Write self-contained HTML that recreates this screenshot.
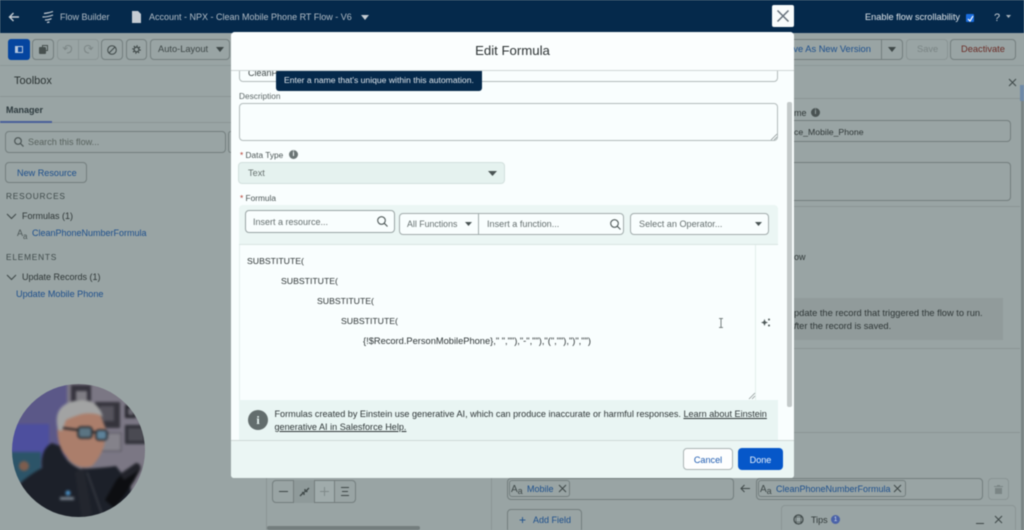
<!DOCTYPE html>
<html><head><meta charset="utf-8">
<style>
html,body{margin:0;padding:0;width:1024px;height:530px;overflow:hidden;background:#99a4a4}
body{font-family:"Liberation Sans",sans-serif;position:relative}
#w{position:absolute;left:0;top:0;width:1024px;height:530px;overflow:hidden;background:#99a4a4;filter:blur(0.55px)}
.a{position:absolute;box-sizing:border-box}
.t{position:absolute;white-space:nowrap;line-height:14px}
.bx{position:absolute;box-sizing:border-box;border:1px solid #747e7e;border-radius:4px}
.mb{position:absolute;box-sizing:border-box;border:1px solid #b3bcbc;border-radius:4px;background:#f9fefe}
svg{position:absolute;overflow:visible}
</style></head><body><div id="w">

<!-- header -->
<div class="a" style="left:0;top:0;width:1024px;height:33px;background:#05294b"></div>
<svg style="left:8px;top:11px" width="12" height="12" viewBox="0 0 12 12" fill="none" stroke="#c5ccd3" stroke-width="1.4"><path d="M11 6H1.500M5.500 2L1.500 6l4 4"/></svg>
<svg style="left:41px;top:10px" width="14" height="14" viewBox="0 0 14 14" fill="none" stroke="#c5ccd3" stroke-width="1.200"><path d="M3 3.500Q8 3 12 1.500M1.500 7Q7 7 12 5M4 10Q8 10 10.500 8.500M6 12.500L8.500 12"/></svg>
<div class="t" style="left:60px;top:10px;font-size:9px;color:#b4bec7">Flow Builder</div>
<svg style="left:132px;top:11px" width="10" height="12" viewBox="0 0 10 12"><path d="M0 0H6L9 3V12H0Z" fill="#c5ccd3"/></svg>
<div class="t" style="left:149px;top:10px;font-size:9px;color:#b4bec7">Account - NPX - Clean Mobile Phone RT Flow - V6</div>
<svg style="left:361px;top:15px" width="8" height="5"><path d="M0 0H8L4 5Z" fill="#c5ccd3"/></svg>

<div class="a" style="left:772px;top:5px;width:22px;height:22px;background:#f9fcfc;border-radius:2px"></div>
<svg style="left:777px;top:10px" width="12" height="12" fill="none" stroke="#66707a" stroke-width="1.500"><path d="M0.500 0.500L11.500 11.500M11.500 0.500L0.500 11.500"/></svg>
<div class="t" style="left:865px;top:10px;font-size:9.200px;color:#dfe5ea">Enable flow scrollability</div>
<div class="a" style="left:966px;top:14px;width:8px;height:8px;background:#1b6ee0;border-radius:1px"></div>
<svg style="left:967px;top:15px" width="7" height="7" fill="none" stroke="#fff" stroke-width="1.200"><path d="M1 4L3 6L6 1"/></svg>
<div class="t" style="left:994px;top:11px;font-size:11px;color:#c5ccd3">?</div>
<svg style="left:1006px;top:15px" width="5" height="3"><path d="M0 0H5L2.500 3Z" fill="#aab4bd"/></svg>

<!-- toolbar -->
<div class="a" style="left:0;top:33px;width:1024px;height:33px;background:#99a4a4;border-bottom:1px solid #8d9898"></div>
<div class="a" style="left:8px;top:39px;width:22px;height:21px;background:#05459f;border-radius:3px"></div>
<div class="a" style="left:15px;top:46px;width:8px;height:7px;border:1px solid #b5c6dc;border-left-width:3px"></div>
<div class="bx" style="left:32px;top:39px;width:22px;height:21px"></div>
<div class="a" style="left:39px;top:47px;width:7px;height:7px;background:#47504f;border-radius:1px"></div>
<div class="a" style="left:42px;top:45px;width:6px;height:6px;border:1px solid #47504f"></div>
<div class="bx" style="left:57px;top:39px;width:42px;height:21px;border-color:#8a9494"></div>
<div class="a" style="left:78px;top:39px;width:1px;height:21px;background:#8a9494"></div>
<svg style="left:63px;top:44px" width="10" height="10" fill="none" stroke="#7c8686" stroke-width="1"><path d="M2 5Q2 1 5.500 1.500Q9 2 8.500 5.500Q8 9 4 9M0 3L2 5.500L4.500 3.500"/></svg>
<svg style="left:83px;top:44px" width="10" height="10" fill="none" stroke="#7c8686" stroke-width="1"><path d="M8 5Q8 1 4.500 1.500Q1 2 1.500 5.500Q2 9 6 9M10 3L8 5.500L5.500 3.500"/></svg>
<div class="bx" style="left:101px;top:39px;width:22px;height:21px"></div>
<svg style="left:107px;top:45px" width="10" height="10" fill="none" stroke="#3f4848" stroke-width="1"><circle cx="5" cy="5" r="4.300"/><path d="M2 8L8 2"/></svg>
<div class="bx" style="left:126px;top:39px;width:21px;height:21px"></div>
<svg style="left:132px;top:45px" width="9" height="9" fill="none" stroke="#3f4848"><circle cx="4.500" cy="4.500" r="2.400" stroke-width="1.200"/><circle cx="4.500" cy="4.500" r="3.600" stroke-dasharray="1.200 1.600" stroke-width="1.400"/></svg>
<div class="bx" style="left:150px;top:39px;width:80px;height:21px"></div>
<div class="t" style="left:158px;top:42px;font-size:9.300px;color:#3e4747">Auto-Layout</div>
<svg style="left:216px;top:47px" width="8" height="5"><path d="M0 0H8L4 5Z" fill="#3f4848"/></svg>

<div class="bx" style="left:794px;top:39px;width:88px;height:21px;border-left:0;border-radius:0"></div>
<div class="t" style="left:794px;top:42px;font-size:9.300px;color:#1d4f8c;width:78px;overflow:hidden;height:14px"><span style="margin-left:-12px">Save As New Version</span></div>
<div class="bx" style="left:881px;top:39px;width:22px;height:21px;border-radius:0 4px 4px 0"></div>
<svg style="left:888px;top:47px" width="8" height="5"><path d="M0 0H8L4 5Z" fill="#3f4848"/></svg>
<div class="bx" style="left:906px;top:39px;width:42px;height:21px;border-color:#8a9494"></div>
<div class="t" style="left:917px;top:42px;font-size:9.300px;color:#7a8484">Save</div>
<div class="bx" style="left:950px;top:39px;width:66px;height:21px"></div>
<div class="t" style="left:961px;top:42px;font-size:9.300px;color:#6b2c26">Deactivate</div>

<!-- toolbox -->
<div class="t" style="left:14px;top:74px;font-size:11px;color:#2a3232">Toolbox</div>
<div class="a" style="left:0;top:96px;width:231px;height:1px;background:#8b9595"></div>
<div class="t" style="left:6px;top:103px;font-size:9px;font-weight:bold;color:#2d3a3e">Manager</div>
<div class="a" style="left:0;top:122px;width:231px;height:1px;background:#8b9595"></div>
<div class="a" style="left:0;top:121px;width:52px;height:2px;background:#4a5f9a"></div>

<div class="bx" style="left:5px;top:131px;width:221px;height:22px"></div>
<div class="a" style="left:228px;top:131px;width:3px;height:22px;border:1px solid #747e7e;border-right:0;border-radius:3px 0 0 3px"></div>
<svg style="left:14px;top:137px" width="10" height="10" fill="none" stroke="#4b5555" stroke-width="1.200"><circle cx="4" cy="4" r="3.300"/><path d="M6.500 6.500L9.500 9.500"/></svg>
<div class="t" style="left:28px;top:135px;font-size:9.100px;color:#59635f">Search this flow...</div>
<div class="bx" style="left:5px;top:162px;width:82px;height:21px"></div>
<div class="t" style="left:17px;top:166px;font-size:9.100px;color:#1d4f8c">New Resource</div>
<div class="t" style="left:6px;top:189px;font-size:8.300px;letter-spacing:.8px;color:#3f4a4a">RESOURCES</div>
<svg style="left:7px;top:214px" width="9" height="5" fill="none" stroke="#3f4848" stroke-width="1"><path d="M0 0L4.500 4.500L9 0"/></svg>
<div class="t" style="left:22px;top:209px;font-size:9px;color:#2f3737">Formulas (1)</div>
<div class="t" style="left:17px;top:226px;font-size:9px;color:#4b5555">A<span style="font-size:8px;position:relative;top:3px">a</span></div>
<div class="t" style="left:32px;top:226px;font-size:9px;color:#1d4f8c">CleanPhoneNumberFormula</div>
<div class="t" style="left:6px;top:250px;font-size:8.300px;letter-spacing:.8px;color:#3f4a4a">ELEMENTS</div>
<svg style="left:7px;top:275px" width="9" height="5" fill="none" stroke="#3f4848" stroke-width="1"><path d="M0 0L4.500 4.500L9 0"/></svg>
<div class="t" style="left:22px;top:270px;font-size:9px;color:#2f3737">Update Records (1)</div>
<div class="t" style="left:16px;top:287px;font-size:9.100px;color:#1d4f8c">Update Mobile Phone</div>

<!-- webcam circle -->
<svg style="left:12px;top:384px" width="133" height="133" viewBox="0 0 133 133">
<defs><clipPath id="c"><circle cx="66.500" cy="66.500" r="66.500"/></clipPath></defs>
<g clip-path="url(#c)"><g style="filter:blur(1.3px)">
<rect x="-3" y="-3" width="140" height="140" fill="#7b7784"/>
<rect x="-3" y="-3" width="58" height="100" fill="#5b5888"/>
<rect x="-3" y="40" width="40" height="35" fill="#4d4f9e"/>
<rect x="59" y="1" width="20" height="18" fill="#35333d"/><rect x="64" y="7" width="11" height="9" fill="#7f7d84"/>
<rect x="83" y="18" width="25" height="26" fill="#35343c"/><rect x="88" y="22" width="14" height="15" fill="#55535c"/>
<rect x="113" y="21" width="11" height="13" fill="#25252c"/><rect x="116" y="24" width="6" height="7" fill="#6a6872"/>
<rect x="113" y="41" width="22" height="19" fill="#2e2e36"/><rect x="116" y="44" width="16" height="13" fill="#4a4a52"/>
<rect x="88" y="49" width="21" height="18" fill="#84828a" stroke="#55535d"/>
<rect x="-3" y="68" width="32" height="30" fill="#2c5468"/>
<circle cx="12" cy="82" r="5" fill="#7d5d4e"/>
<path d="M46 35Q43 60 54 72Q65 87 80 82Q88 74 92 62L94 45L88 30Q65 22 46 35Z" fill="#ab7e6b"/>
<path d="M46 46Q40 22 62 17Q85 12 91 33Q84 28 70 30Q60 33 54 36L50 47Z" fill="#a2a3a3"/>
<path d="M51 44L96 50" stroke="#1d2026" stroke-width="2"/>
<rect x="66" y="43" width="14" height="11" rx="3" fill="#5b7482" stroke="#1d2026" stroke-width="1.500"/>
<rect x="84" y="46" width="11" height="10" rx="3" fill="#5e8299" stroke="#1d2026" stroke-width="1.500"/>
<path d="M4 136L5 102Q18 90 30 84Q28 65 40 59L48 62Q52 78 68 85Q90 84 104 82L118 100L124 136Z" fill="#1c2029"/>
<path d="M63 88L72 84L80 130L70 136Z" fill="#23262e"/>
<path d="M75 88L90 130" stroke="#4a4c54" stroke-width="1"/>
<path d="M93 116L105 95L124 79Q130 80 128 86L122 97L112 112L102 124Z" fill="#0d0e11"/>
<path d="M108 90L124 79Q131 81 126 87L112 96Z" fill="#22232a"/>
<circle cx="56" cy="109" r="2.500" fill="#4b8fc4"/>
<rect x="48" y="113" width="14" height="3" fill="#77818c"/>
</g></g></svg>

<!-- right panel bits -->
<svg style="left:1009px;top:79px" width="7" height="7" fill="none" stroke="#3f4848" stroke-width="1"><path d="M0 0L7 7M7 0L0 7"/></svg>
<div class="a" style="left:794px;top:98px;width:226px;height:1px;background:#8b9595"></div>
<div class="a" style="left:1020px;top:85px;width:4px;height:16px;background:#6f8aa8"></div>
<div class="a" style="left:1021px;top:101px;width:3px;height:429px;background:#7b8585"></div>
<div class="t" style="left:794px;top:106px;font-size:9px;color:#2f3737">me</div>
<div class="a" style="left:811px;top:108px;width:9px;height:9px;border-radius:50%;background:#4a5353"></div>
<div class="t" style="left:811px;top:106px;width:9px;text-align:center;font-size:7px;font-weight:bold;color:#99a4a4">i</div>
<div class="bx" style="left:794px;top:120px;width:217px;height:22px;border-left:0;border-radius:0 4px 4px 0"></div>
<div class="t" style="left:794px;top:125px;font-size:8.700px;color:#2f3737">ce_Mobile_Phone</div>
<div class="bx" style="left:794px;top:162px;width:217px;height:39px;border-left:0;border-radius:0 4px 4px 0"></div>
<div class="a" style="left:794px;top:206px;width:226px;height:1px;background:#8b9595"></div>
<div class="t" style="left:794px;top:250px;font-size:9px;color:#2f3737">ow</div>
<div class="a" style="left:794px;top:298px;width:209px;height:42px;background:#919b9b"></div>
<div class="t" style="left:794px;top:306px;font-size:9.300px;color:#2f3737">pdate the record that triggered the flow to run.</div>
<div class="t" style="left:794px;top:319px;font-size:9.300px;color:#2f3737"><i>f</i>ter the record is saved.</div>
<div class="a" style="left:794px;top:348px;width:226px;height:1px;background:#8b9595"></div>
<div class="a" style="left:794px;top:432px;width:226px;height:1px;background:#8b9595"></div>

<!-- canvas/bottom -->
<div class="a" style="left:266px;top:478px;width:1px;height:52px;background:#8b9595"></div>
<div class="a" style="left:491px;top:478px;width:1px;height:52px;background:#8b9595"></div>
<div class="a" style="left:267px;top:526px;width:153px;height:4px;background:#747e7e;border-radius:2px"></div>
<div class="bx" style="left:272px;top:480px;width:84px;height:23px"></div>
<div class="a" style="left:293px;top:480px;width:22px;height:23px;border-left:1px solid #747e7e;border-right:1px solid #747e7e;background:#8f9a9a"></div>
<div class="a" style="left:315px;top:481px;width:19px;height:21px;background:#a0abab"></div>
<div class="a" style="left:334px;top:480px;width:1px;height:23px;background:#747e7e"></div>
<div class="a" style="left:279px;top:491px;width:9px;height:1px;background:#3f4848"></div>
<svg style="left:299px;top:487px" width="11" height="10" fill="none" stroke="#3f4848" stroke-width="1.300"><path d="M1 9L4 6M3 5.500H5V8M10 1L7 4M6 2V4.500H8.500"/></svg>
<div class="a" style="left:320px;top:491px;width:9px;height:1px;background:#808a8a"></div>
<div class="a" style="left:324px;top:487px;width:1px;height:9px;background:#808a8a"></div>
<div class="a" style="left:341px;top:487px;width:8px;height:1px;background:#3f4848"></div>
<div class="a" style="left:342px;top:491px;width:6px;height:1px;background:#3f4848"></div>
<div class="a" style="left:341px;top:495px;width:8px;height:1px;background:#3f4848"></div>

<div class="bx" style="left:507px;top:478px;width:227px;height:22px"></div>
<div class="bx" style="left:509px;top:480px;width:61px;height:17px;border-radius:3px"></div>
<div class="t" style="left:511px;top:482px;font-size:10px;color:#3f4848">A<span style="font-size:9px;position:relative;top:2px">a</span></div>
<div class="t" style="left:527px;top:482px;font-size:9px;color:#1d4f8c">Mobile</div>
<svg style="left:559px;top:485px" width="7" height="7" fill="none" stroke="#3f4848" stroke-width="1"><path d="M0 0L7 7M7 0L0 7"/></svg>
<svg style="left:740px;top:484px" width="10" height="9" fill="none" stroke="#3f4848" stroke-width="1"><path d="M10 4.500H1M4.500 1L1 4.500L4.500 8"/></svg>
<div class="bx" style="left:756px;top:478px;width:227px;height:22px"></div>
<div class="bx" style="left:758px;top:480px;width:148px;height:17px;border-radius:3px"></div>
<div class="t" style="left:760px;top:482px;font-size:10px;color:#3f4848">A<span style="font-size:9px;position:relative;top:2px">a</span></div>
<div class="t" style="left:776px;top:482px;font-size:9px;color:#1d4f8c">CleanPhoneNumberFormula</div>
<svg style="left:894px;top:485px" width="7" height="7" fill="none" stroke="#3f4848" stroke-width="1"><path d="M0 0L7 7M7 0L0 7"/></svg>
<div class="bx" style="left:988px;top:478px;width:21px;height:22px;border-color:#8a9494"></div>
<svg style="left:994px;top:485px" width="9" height="9" fill="#7b8585"><path d="M0 1H9V2H0ZM1 3H8V9H1ZM3 0H6V1H3Z"/></svg>
<div class="bx" style="left:507px;top:509px;width:75px;height:24px"></div>
<div class="t" style="left:519px;top:513px;font-size:12px;color:#1d4f8c">+</div>
<div class="t" style="left:533px;top:513px;font-size:9px;color:#1d4f8c">Add Field</div>
<div class="a" style="left:781px;top:505px;width:235px;height:30px;border:1px solid #8b9595;border-radius:4px 4px 0 0;background:#99a4a4"></div>
<svg style="left:793px;top:514px" width="11" height="11" fill="none" stroke="#3f4848" stroke-width="1.200"><circle cx="5.500" cy="5.500" r="4.500"/><path d="M3 1V10M8 1V10M1 3H10M1 8H10" stroke-width=".6"/></svg>
<div class="t" style="left:811px;top:513px;font-size:9px;color:#2f3737">Tips</div>
<div class="a" style="left:831px;top:515px;width:9px;height:9px;border-radius:50%;background:#4a62a8"></div>
<div class="t" style="left:831px;top:513px;width:9px;text-align:center;font-size:6px;color:#dbe2f2">1</div>
<div class="a" style="left:976px;top:523px;width:8px;height:1px;background:#3f4848"></div>
<svg style="left:995px;top:516px" width="7" height="7" fill="none" stroke="#3f4848" stroke-width="1"><path d="M0 0L7 7M7 0L0 7"/></svg>

<!-- modal -->
<div class="a" style="left:231px;top:32px;width:563px;height:446px;background:#f9fefe;border-radius:4px 4px 3px 3px;overflow:hidden">
 <div class="a" style="left:0;top:0;width:563px;height:39px;border-bottom:1px solid #cfd6d6;background:#fbfefe;z-index:5"></div>
 <div class="t" style="left:0;top:11px;width:563px;text-align:center;font-size:13.200px;line-height:16px;color:#2c3233;z-index:6">Edit Formula</div>

 <div class="mb" style="left:8px;top:30px;width:539px;height:20px"></div>
 <div class="t" style="left:17px;top:34px;font-size:9px;color:#3f4848;z-index:1">CleanP</div>
 <div class="t" style="left:8px;top:57px;font-size:8.300px;color:#5c6666">Description</div>
 <div class="mb" style="left:8px;top:71px;width:539px;height:38px"></div>
 <svg style="left:540px;top:102px" width="6" height="6" fill="none" stroke="#8f9999" stroke-width=".8"><path d="M0 6L6 0M3 6L6 3"/></svg>

 <div class="t" style="left:9px;top:116px;font-size:8.300px;color:#4a5454"><span style="color:#b03a2e">*</span> Data Type</div>
 <div class="a" style="left:58px;top:118px;width:9px;height:9px;border-radius:50%;background:#6b7575"></div>
 <div class="t" style="left:58px;top:116px;width:9px;text-align:center;font-size:7px;font-weight:bold;color:#f9fefe">i</div>
 <div class="a" style="left:7px;top:130px;width:267px;height:22px;background:#e5f2ef;border:1px solid #d3e0de;border-radius:4px"></div>
 <div class="t" style="left:17px;top:134px;font-size:9.200px;color:#67716f">Text</div>
 <svg style="left:257px;top:139px" width="9" height="5"><path d="M0 0H9L4.500 5Z" fill="#4a5454"/></svg>
 <div class="t" style="left:9px;top:159px;font-size:8.300px;color:#4a5454"><span style="color:#b03a2e">*</span> Formula</div>

 <div class="a" style="left:8px;top:173px;width:539px;height:40px;background:#ebf6f4;border-radius:4px 4px 0 0;border-bottom:1px solid #d9e5e3"></div>
 <div class="mb" style="left:14px;top:178px;width:150px;height:23px;border-color:#9aa4a4"></div>
 <div class="t" style="left:22px;top:183px;font-size:9px;color:#646e6e">Insert a resource...</div>
 <svg style="left:146px;top:184px" width="11" height="11" fill="none" stroke="#4f5959" stroke-width="1.100"><circle cx="4.500" cy="4.500" r="3.800"/><path d="M7.200 7.200L10.500 10.500"/></svg>
 <div class="mb" style="left:168px;top:181px;width:225px;height:22px;border-color:#a2acac"></div>
 <div class="a" style="left:247px;top:181px;width:1px;height:22px;background:#a2acac"></div>
 <div class="t" style="left:176px;top:185px;font-size:8.800px;color:#646e6e">All Functions</div>
 <svg style="left:234px;top:190px" width="7" height="4"><path d="M0 0H7L3.500 4Z" fill="#4a5454"/></svg>
 <div class="t" style="left:256px;top:185px;font-size:9.100px;color:#646e6e">Insert a function...</div>
 <svg style="left:379px;top:187px" width="11" height="11" fill="none" stroke="#4f5959" stroke-width="1.100"><circle cx="4.500" cy="4.500" r="3.800"/><path d="M7.200 7.200L10.500 10.500"/></svg>
 <div class="mb" style="left:399px;top:181px;width:139px;height:22px;border-color:#a2acac"></div>
 <div class="t" style="left:408px;top:185px;font-size:9.100px;color:#646e6e">Select an Operator...</div>
 <svg style="left:524px;top:190px" width="7" height="4"><path d="M0 0H7L3.500 4Z" fill="#4a5454"/></svg>

 <div class="a" style="left:8px;top:213px;width:1px;height:155px;background:#e6f0ee"></div>
 <div class="a" style="left:524px;top:213px;width:1px;height:155px;background:#e3eeec"></div>
 <div class="t" style="left:16px;top:221.500px;font-size:8.700px;color:#2e3536">SUBSTITUTE(</div>
 <div class="t" style="left:50px;top:241.500px;font-size:8.700px;color:#2e3536">SUBSTITUTE(</div>
 <div class="t" style="left:86px;top:261.500px;font-size:8.700px;color:#2e3536">SUBSTITUTE(</div>
 <div class="t" style="left:110px;top:281.500px;font-size:8.700px;color:#2e3536">SUBSTITUTE(</div>
 <div class="t" style="left:132px;top:302px;font-size:9.300px;color:#2e3536">{!$Record.PersonMobilePhone}," ",""),"-",""),"(",""),")","")</div>
 <svg style="left:487px;top:286px" width="6" height="10" fill="none" stroke="#555f5f" stroke-width=".8"><path d="M1 .5H5M1 9.500H5M3 .5V9.500"/></svg>
 <svg style="left:530px;top:285px" width="10" height="10" fill="#4f5959"><path d="M3.500 2L4.500 4.500L7 5.500L4.500 6.500L3.500 9L2.500 6.500L0 5.500L2.500 4.500Z"/><circle cx="8" cy="2.500" r="1"/><circle cx="8" cy="8.500" r="1"/></svg>
 <svg style="left:518px;top:361px" width="6" height="6" fill="none" stroke="#8f9999" stroke-width=".8"><path d="M0 6L6 0M3 6L6 3"/></svg>

 <div class="a" style="left:8px;top:368px;width:539px;height:40px;background:#e9f5f3"></div>
 <div class="a" style="left:17px;top:378px;width:20px;height:20px;border-radius:50%;background:#636d6d"></div>
 <div class="t" style="left:17px;top:381px;width:20px;text-align:center;font-size:12px;font-weight:bold;color:#e9f5f3;font-family:'Liberation Serif',serif">i</div>
 <div class="t" style="left:43.500px;top:375px;font-size:9.100px;color:#2e3536">Formulas created by Einstein use generative AI, which can produce inaccurate or harmful responses. <u>Learn about Einstein</u></div>
 <div class="t" style="left:43.500px;top:388px;font-size:9.100px;color:#2e3536"><u>generative AI in Salesforce Help.</u></div>

 <div class="a" style="left:556px;top:70px;width:5px;height:305px;background:#c3c9c9;border-radius:2px"></div>
 <div class="a" style="left:0;top:408px;width:563px;height:38px;background:#ebf6f4;border-top:1px solid #cfd9d7"></div>
 <div class="a" style="left:452px;top:416px;width:50px;height:22px;background:#fdfefe;border:1px solid #aab4b4;border-radius:4px"></div>
 <div class="t" style="left:452px;top:421px;width:50px;text-align:center;font-size:9.100px;color:#1d5bb0">Cancel</div>
 <div class="a" style="left:507px;top:416px;width:45px;height:22px;background:#0657c9;border-radius:4px"></div>
 <div class="t" style="left:507px;top:421px;width:45px;text-align:center;font-size:9.100px;color:#eaf2fb">Done</div>
</div>

<!-- tooltip -->
<div class="a" style="left:287px;top:63px;width:10px;height:10px;background:#05294b;transform:rotate(45deg)"></div>
<div class="a" style="left:276px;top:68px;width:206px;height:23px;background:#05294b;border-radius:3px"></div>
<div class="t" style="left:284px;top:73px;font-size:8.600px;color:#dfe6ec">Enter a name that's unique within this automation.</div>

</div></body></html>
